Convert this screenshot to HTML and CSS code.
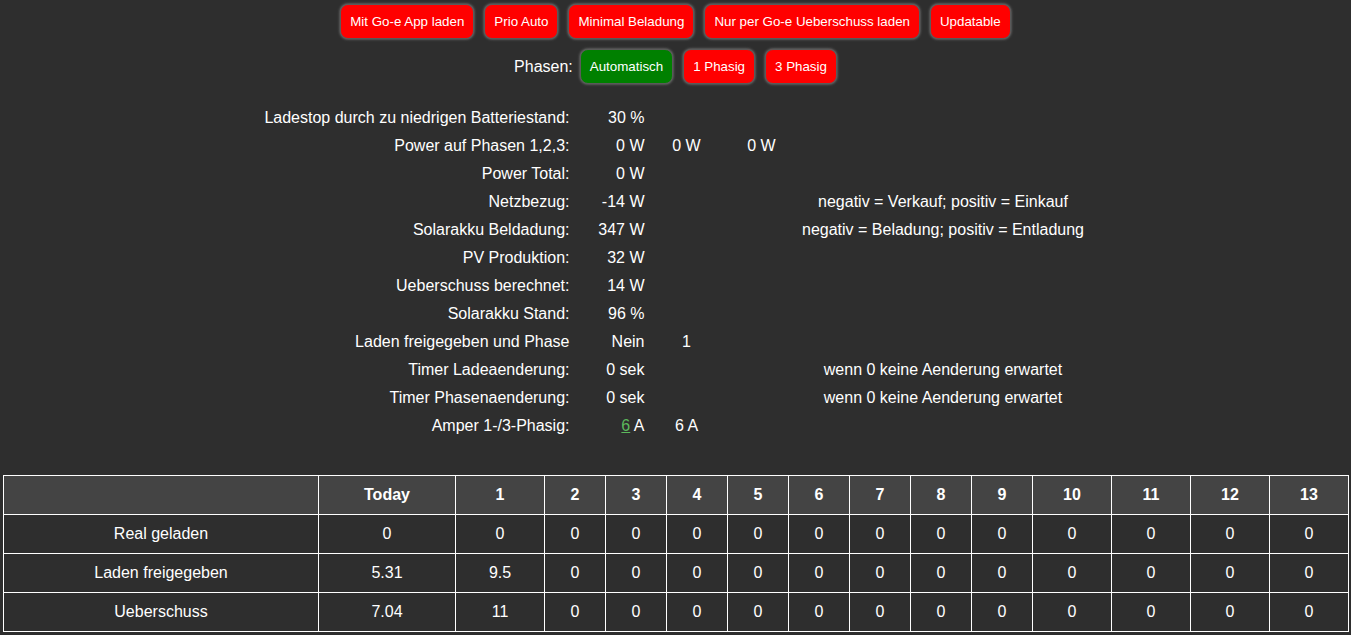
FILE: index.html
```html
<!DOCTYPE html>
<html lang="de">
<head>
<meta charset="utf-8">
<title>Go-e Steuerung</title>
<link rel="stylesheet" href="styles.css">
</head>
<body>
<div class="modes">
  <button class="btn red">Mit Go-e App laden</button>
  <button class="btn red">Prio Auto</button>
  <button class="btn red">Minimal Beladung</button>
  <button class="btn red">Nur per Go-e Ueberschuss laden</button>
  <button class="btn red">Updatable</button>
</div>
<div class="phases">
  <span class="phases-label">Phasen:</span>
  <button class="btn green">Automatisch</button>
  <button class="btn red">1 Phasig</button>
  <button class="btn red">3 Phasig</button>
</div>

<table class="info">
  <colgroup>
    <col class="i-label"><col class="i-val"><col class="i-v3"><col class="i-v4"><col class="i-note">
  </colgroup>
  <tr><td class="lbl">Ladestop durch zu niedrigen Batteriestand:</td><td class="val">30 %</td><td></td><td></td><td></td></tr>
  <tr><td class="lbl">Power auf Phasen 1,2,3:</td><td class="val">0 W</td><td class="ctr">0 W</td><td class="ctr">0 W</td><td></td></tr>
  <tr><td class="lbl">Power Total:</td><td class="val">0 W</td><td></td><td></td><td></td></tr>
  <tr><td class="lbl">Netzbezug:</td><td class="val">-14 W</td><td></td><td></td><td class="ctr">negativ = Verkauf; positiv = Einkauf</td></tr>
  <tr><td class="lbl">Solarakku Beldadung:</td><td class="val">347 W</td><td></td><td></td><td class="ctr">negativ = Beladung; positiv = Entladung</td></tr>
  <tr><td class="lbl">PV Produktion:</td><td class="val">32 W</td><td></td><td></td><td></td></tr>
  <tr><td class="lbl">Ueberschuss berechnet:</td><td class="val">14 W</td><td></td><td></td><td></td></tr>
  <tr><td class="lbl">Solarakku Stand:</td><td class="val">96 %</td><td></td><td></td><td></td></tr>
  <tr><td class="lbl">Laden freigegeben und Phase</td><td class="val">Nein</td><td class="ctr">1</td><td></td><td></td></tr>
  <tr><td class="lbl">Timer Ladeaenderung:</td><td class="val">0 sek</td><td></td><td></td><td class="ctr">wenn 0 keine Aenderung erwartet</td></tr>
  <tr><td class="lbl">Timer Phasenaenderung:</td><td class="val">0 sek</td><td></td><td></td><td class="ctr">wenn 0 keine Aenderung erwartet</td></tr>
  <tr><td class="lbl">Amper 1-/3-Phasig:</td><td class="val"><a href="#" class="link">6</a> A</td><td class="ctr">6 A</td><td></td><td></td></tr>
</table>

<table class="stats">
  <colgroup>
    <col class="c-label"><col class="c-today"><col class="c-one">
    <col class="c-n"><col class="c-n"><col class="c-n"><col class="c-n"><col class="c-n"><col class="c-n"><col class="c-n"><col class="c-n">
    <col class="c-w"><col class="c-w"><col class="c-w"><col class="c-w">
  </colgroup>
  <thead>
    <tr><th></th><th>Today</th><th>1</th><th>2</th><th>3</th><th>4</th><th>5</th><th>6</th><th>7</th><th>8</th><th>9</th><th>10</th><th>11</th><th>12</th><th>13</th></tr>
  </thead>
  <tbody>
    <tr><td>Real geladen</td><td>0</td><td>0</td><td>0</td><td>0</td><td>0</td><td>0</td><td>0</td><td>0</td><td>0</td><td>0</td><td>0</td><td>0</td><td>0</td><td>0</td></tr>
    <tr><td>Laden freigegeben</td><td>5.31</td><td>9.5</td><td>0</td><td>0</td><td>0</td><td>0</td><td>0</td><td>0</td><td>0</td><td>0</td><td>0</td><td>0</td><td>0</td><td>0</td></tr>
    <tr><td>Ueberschuss</td><td>7.04</td><td>11</td><td>0</td><td>0</td><td>0</td><td>0</td><td>0</td><td>0</td><td>0</td><td>0</td><td>0</td><td>0</td><td>0</td><td>0</td></tr>
  </tbody>
</table>
</body>
</html>
```

FILE: styles.css
```css
html, body {
  margin: 0;
  padding: 0;
  background: #2e2e2e;
  color: #ffffff;
  font-family: "Liberation Sans", Arial, sans-serif;
  font-size: 16px;
}

.modes {
  display: flex;
  justify-content: center;
  gap: 10px;
  padding-top: 4px;
}

.phases {
  display: flex;
  justify-content: center;
  align-items: center;
  gap: 10px;
  margin-top: 10px;
}

.phases-label {
  margin-right: -3px;
  font-size: 16px;
}

.btn {
  box-sizing: border-box;
  height: 35px;
  padding: 0 9px;
  border: 1px solid #5a5a5a;
  border-radius: 8px;
  box-shadow: 0 0 3px #8a8a8a;
  color: #ffffff;
  font-family: "Liberation Sans", Arial, sans-serif;
  font-size: 13.33px;
  cursor: pointer;
}

.red { background: #ff0000; }
.green { background: #008000; }

.info {
  margin: 20px auto 0;
  border-collapse: collapse;
  table-layout: fixed;
  width: 826px;
}

.info td {
  height: 28px;
  padding: 0;
  line-height: 18px;
  white-space: nowrap;
}

.i-label { width: 309px; }
.i-val { width: 76px; }
.i-v3 { width: 78px; }
.i-v4 { width: 72px; }
.i-note { width: 291px; }

.info .lbl { text-align: right; padding-right: 2px; }
.info .val { text-align: right; padding-right: 3px; }
.info .ctr { text-align: center; }

.link {
  color: #5cb85c;
  text-decoration: underline;
}

.stats {
  margin: 35px 0 0 3px;
  width: 1345px;
  border-collapse: collapse;
  table-layout: fixed;
}

.stats th, .stats td {
  border: 1px solid #ffffff;
  height: 38px;
  padding: 0;
  text-align: center;
  font-size: 16px;
}

.stats th {
  background: #444444;
  font-weight: bold;
}

.stats td { background: #2e2e2e; }

.c-label { width: 315px; }
.c-today { width: 137px; }
.c-one { width: 89px; }
.c-n { width: 61px; }
.c-w { width: 79px; }
```
